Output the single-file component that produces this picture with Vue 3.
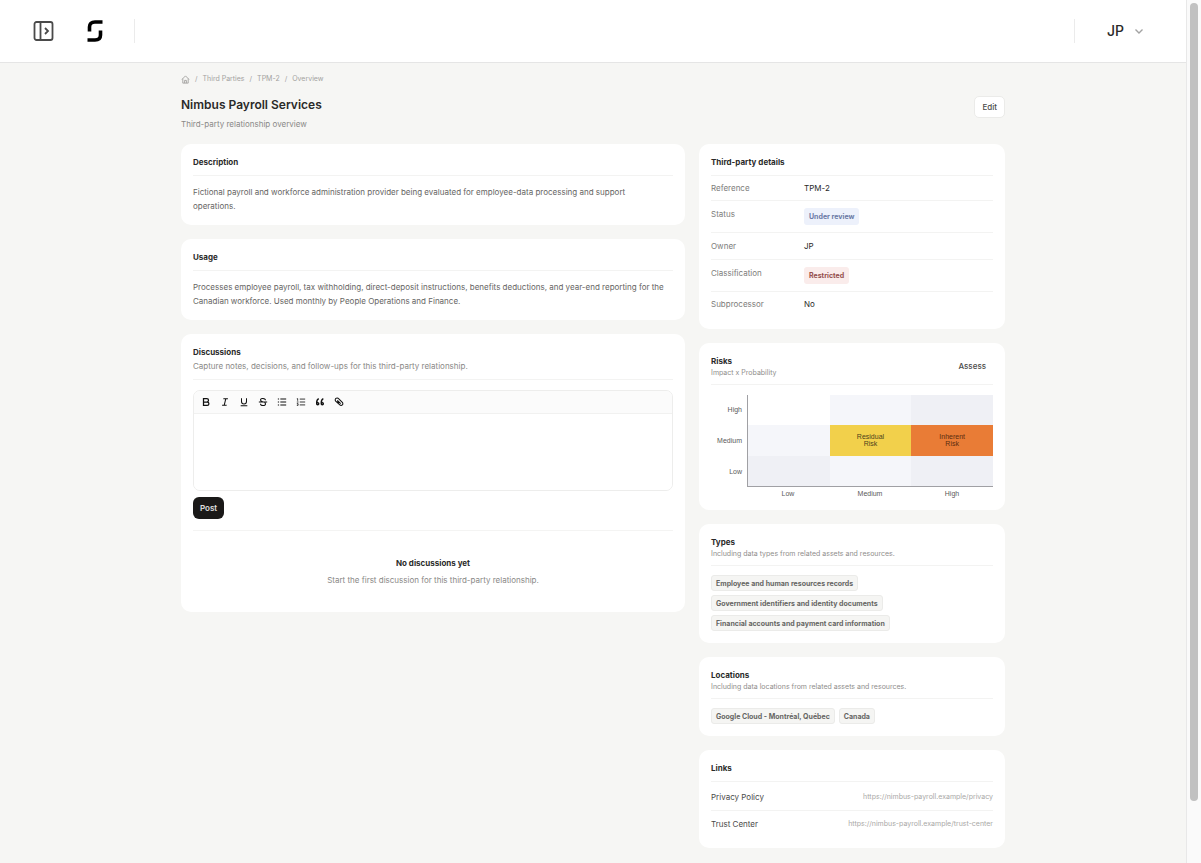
<script setup>
const crumbs = ['Third Parties', 'TPM-2', 'Overview']

const details = [
  { label: 'Reference', value: 'TPM-2' },
  { label: 'Status', value: 'Under review', tone: 'info' },
  { label: 'Owner', value: 'JP' },
  { label: 'Classification', value: 'Restricted', tone: 'danger' },
  { label: 'Subprocessor', value: 'No' },
]

const levels = ['Low', 'Medium', 'High']
const matrix = [
  { impact: 'High', cells: [{ tone: 'blank' }, { tone: 'pale' }, { tone: 'soft' }] },
  {
    impact: 'Medium',
    cells: [
      { tone: 'pale' },
      { tone: 'residual', text: 'Residual Risk' },
      { tone: 'inherent', text: 'Inherent Risk' },
    ],
  },
  { impact: 'Low', cells: [{ tone: 'soft' }, { tone: 'pale' }, { tone: 'soft' }] },
]

const types = [
  'Employee and human resources records',
  'Government identifiers and identity documents',
  'Financial accounts and payment card information',
]
const locations = ['Google Cloud - Montréal, Québec', 'Canada']
const links = [
  { name: 'Privacy Policy', url: 'https://nimbus-payroll.example/privacy' },
  { name: 'Trust Center', url: 'https://nimbus-payroll.example/trust-center' },
]

const tools = [
  { name: 'Bold', d: 'M6 4h8a4 4 0 0 1 0 8H6zM6 12h9a4 4 0 0 1 0 8H6z', w: 3 },
  { name: 'Italic', d: 'M8 4h11M5 20h11M14 4l-4 16', w: 2.5 },
  { name: 'Underline', d: 'M6 3v8a6 6 0 0 0 12 0V3M4 21h16', w: 2.5 },
  { name: 'Strikethrough', d: 'M18 8c0-5-12-6-12-1 0 3 3 4 6 5M2 12h20M6 16c0 6 12 6 12 1 0-2-1-3-2-4', w: 2.5 },
  { name: 'Bulleted list', d: 'M8 5h14M8 12h14M8 19h14M2 5h3M2 12h3M2 19h3', w: 2.5 },
  { name: 'Numbered list', d: 'M9 5h13M9 12h13M9 19h13M2 4h2v5M2 12h4M2 16h3v4H2', w: 2 },
  { name: 'Quote', d: 'M9 4C4 6 4 10 4 15M20 4c-5 2-5 6-5 11M4 16a2.500 2.500 0 1 0 5 0 2.500 2.500 0 0 0-5 0zM15 16a2.500 2.500 0 1 0 5 0 2.500 2.500 0 0 0-5 0z', w: 3.5 },
  { name: 'Link', d: 'M11 4l9 9a4 4 0 0 1-6 6L4 10a4 4 0 0 1 7-6zM8 8l8 8M12 14l-4-4', w: 2.5 },
]
</script>

<template>
  <div class="window">
    <div class="page">
      <header class="topbar">
        <button class="icon-button" type="button" aria-label="Expand sidebar">
          <svg class="panel-icon" viewBox="0 0 20 20" fill="none" stroke="currentColor" stroke-width="1.800">
            <rect x="1" y="1" width="18" height="18" rx="2" />
            <path d="M7 1v18M11.500 7l3 3-3 3" />
          </svg>
        </button>
        <a class="brand" href="#" aria-label="Home">
          <svg class="logo" viewBox="0 0 16 22" fill="none" stroke="currentColor" stroke-width="3.600">
            <path d="M15.500 2H8Q2.500 2 2.500 7V11.500" />
            <path d="M0.500 20H8Q13.500 20 13.500 15V10.500" />
          </svg>
        </a>
        <span class="bar-divider"></span>
        <span class="bar-divider end"></span>
        <button class="account" type="button">
          JP
          <svg class="chevron" viewBox="0 0 10 10" fill="none" stroke="currentColor" stroke-width="1.400">
            <path d="M1.500 3.500L5 7l3.500-3.500" />
          </svg>
        </button>
      </header>

      <main class="content">
        <nav class="crumbs" aria-label="Breadcrumb">
          <a href="#" aria-label="Home">
            <svg class="home" viewBox="0 0 10 10" fill="none" stroke="currentColor">
              <path d="M1 5L5 1l4 4M2 4v5h6V4M4 9V6h2v3" />
            </svg>
          </a>
          <template v-for="c in crumbs" :key="c">
            <span>/</span>
            <a href="#">{{ c }}</a>
          </template>
        </nav>

        <div class="title-row">
          <div>
            <h1>Nimbus Payroll Services</h1>
            <p class="lead">Third-party relationship overview</p>
          </div>
          <button class="edit" type="button">Edit</button>
        </div>

        <div class="columns">
          <div class="stack">
            <section class="card">
              <div class="head"><h2>Description</h2></div>
              <p class="prose">
                Fictional payroll and workforce administration provider being evaluated for employee-data processing and
                support operations.
              </p>
            </section>

            <section class="card">
              <div class="head"><h2>Usage</h2></div>
              <p class="prose">
                Processes employee payroll, tax withholding, direct-deposit instructions, benefits deductions, and
                year-end reporting for the Canadian workforce. Used monthly by People Operations and Finance.
              </p>
            </section>

            <section class="card">
              <div class="head">
                <h2>Discussions</h2>
                <p class="sub">Capture notes, decisions, and follow-ups for this third-party relationship.</p>
              </div>
              <div class="editor">
                <div class="toolbar">
                  <button v-for="t in tools" :key="t.name" class="tool" type="button" :aria-label="t.name">
                    <svg viewBox="0 0 24 24" fill="none" stroke="currentColor" :stroke-width="t.w">
                      <path :d="t.d" />
                    </svg>
                  </button>
                </div>
                <textarea class="entry" aria-label="Discussion message"></textarea>
              </div>
              <button class="post" type="button">Post</button>
              <div class="empty">
                <h3>No discussions yet</h3>
                <p>Start the first discussion for this third-party relationship.</p>
              </div>
            </section>
          </div>

          <div class="stack">
            <section class="card">
              <div class="head"><h2>Third-party details</h2></div>
              <dl class="details">
                <div v-for="d in details" :key="d.label" class="detail">
                  <dt>{{ d.label }}</dt>
                  <dd>
                    <span v-if="d.tone" class="chip" :class="d.tone">{{ d.value }}</span>
                    <template v-else>{{ d.value }}</template>
                  </dd>
                </div>
              </dl>
            </section>

            <section class="card">
              <div class="head compact split">
                <div>
                  <h2>Risks</h2>
                  <p class="note">Impact x Probability</p>
                </div>
                <button class="assess" type="button">Assess</button>
              </div>
              <div class="risk">
                <div class="impact">
                  <span v-for="r in matrix" :key="r.impact">{{ r.impact }}</span>
                </div>
                <div class="plot">
                  <template v-for="r in matrix" :key="r.impact">
                    <div v-for="(c, i) in r.cells" :key="i" class="cell" :class="c.tone">
                      <span v-if="c.text">{{ c.text }}</span>
                    </div>
                  </template>
                </div>
                <div class="probability">
                  <span v-for="l in levels" :key="l">{{ l }}</span>
                </div>
              </div>
            </section>

            <section class="card">
              <div class="head compact">
                <h2>Types</h2>
                <p class="note">Including data types from related assets and resources.</p>
              </div>
              <div class="chips">
                <span v-for="t in types" :key="t" class="chip neutral">{{ t }}</span>
              </div>
            </section>

            <section class="card">
              <div class="head compact">
                <h2>Locations</h2>
                <p class="note">Including data locations from related assets and resources.</p>
              </div>
              <div class="chips">
                <span v-for="l in locations" :key="l" class="chip neutral">{{ l }}</span>
              </div>
            </section>

            <section class="card">
              <div class="head"><h2>Links</h2></div>
              <ul class="links">
                <li v-for="l in links" :key="l.name">
                  <span>{{ l.name }}</span>
                  <a href="#">{{ l.url }}</a>
                </li>
              </ul>
            </section>
          </div>
        </div>
      </main>
    </div>
    <div class="scrollbar" aria-hidden="true"><div class="thumb"></div></div>
  </div>
</template>

<style>
body {
  background: #f6f6f4;
}
</style>

<style scoped>
.window {
  display: flex;
  min-height: 100vh;
  background: #f6f6f4;
  color: #2a2a29;
  font-family: Inter, "Liberation Sans", sans-serif;
  font-size: 8px;
  line-height: 12px;
}
.window * {
  box-sizing: border-box;
}
h1, h2, h3, p, dl, dd, ul {
  margin: 0;
  padding: 0;
}
button {
  font: inherit;
  color: inherit;
  background: none;
  border: 0;
  padding: 0;
  cursor: pointer;
}
a {
  color: inherit;
  text-decoration: none;
}
svg {
  display: block;
}
.page {
  flex: 1;
  min-width: 0;
}
.topbar {
  display: flex;
  align-items: center;
  height: 63px;
  padding: 0 42px 0 33px;
  background: #fff;
  border-bottom: 1px solid #e5e5e5;
}
.icon-button {
  color: #4a4a4a;
}
.panel-icon {
  width: 21px;
  height: 20px;
}
.brand {
  margin: 0 31px 0 33px;
  color: #000;
}
.logo {
  width: 16px;
  height: 22px;
}
.bar-divider {
  width: 1px;
  height: 24px;
  background: #ebebeb;
}
.bar-divider.end {
  margin-left: auto;
}
.account {
  display: flex;
  align-items: center;
  gap: 10px;
  margin-left: 32px;
  font-size: 14px;
  font-weight: 500;
  line-height: 20px;
}
.chevron {
  width: 10px;
  height: 10px;
  color: #a3a3a3;
}
.content {
  max-width: 824px;
  margin: 0 auto;
  padding: 10px 0 15px;
}
.crumbs {
  display: flex;
  align-items: center;
  gap: 5px;
  font-size: 7px;
  color: #a3a29f;
}
.home {
  width: 9px;
  height: 9px;
}
.title-row {
  display: flex;
  justify-content: space-between;
  align-items: flex-start;
  padding: 11px 0 14px;
}
h1 {
  font-size: 12px;
  font-weight: 600;
  line-height: 18px;
}
.lead {
  margin-top: 4px;
  color: #8a8987;
}
.edit {
  height: 22px;
  padding: 0 7px;
  background: #fff;
  border: 1px solid #ebebe9;
  border-radius: 5px;
  font-weight: 500;
  color: #4a4a49;
}
.columns {
  display: grid;
  grid-template-columns: minmax(0, 1fr) 306px;
  gap: 14px;
  align-items: start;
}
.stack {
  display: grid;
  gap: 14px;
}
.card {
  min-width: 0;
  padding: 12px;
  background: #fff;
  border-radius: 10px;
}
.head {
  padding-bottom: 7px;
  border-bottom: 1px solid #f3f3f2;
}
.head.compact {
  padding-bottom: 5px;
}
.split {
  display: flex;
  justify-content: space-between;
  align-items: center;
}
h2, h3 {
  font-size: 8px;
  font-weight: 700;
  line-height: 12px;
}
.sub {
  margin-top: 2px;
  color: #8a8987;
}
.note {
  font-size: 7px;
  color: #8f8e8c;
}
.prose {
  margin-top: 9px;
  padding-right: 5px;
  line-height: 14px;
  color: #666563;
}
.editor {
  margin-top: 10px;
  border: 1px solid #ededec;
  border-radius: 7px;
  overflow: hidden;
}
.toolbar {
  display: flex;
  gap: 9px;
  padding: 6px 7px;
  background: #fbfbfb;
  border-bottom: 1px solid #f1f1f0;
}
.tool {
  width: 10px;
  height: 10px;
  color: #111;
}
.tool svg {
  width: 10px;
  height: 10px;
}
.entry {
  display: block;
  width: 100%;
  height: 76px;
  padding: 8px;
  border: 0;
  outline: 0;
  resize: none;
  font: inherit;
  background: #fff;
}
.post {
  display: block;
  height: 22px;
  margin-top: 6px;
  padding: 0 7px;
  background: #1a1918;
  border-radius: 6px;
  color: #e0e0e0;
  font-weight: 600;
}
.empty {
  margin-top: 11px;
  padding: 26px 0 14px;
  border-top: 1px solid #f4f4f3;
  text-align: center;
  color: #8a8987;
}
.empty h3 {
  color: #2a2a29;
}
.empty p {
  margin-top: 5px;
}
.detail {
  display: grid;
  grid-template-columns: 93px 1fr;
  padding: 7px 0;
  border-bottom: 1px solid #f3f3f2;
}
.detail:first-child {
  padding: 6px 0;
}
.detail:last-child {
  padding: 6px 0 7px;
  border-bottom: 0;
}
dt {
  color: #7d7c7a;
}
.chip {
  display: block;
  width: fit-content;
  padding: 3px 4px 1px;
  border: 1px solid transparent;
  border-radius: 3px;
  font-size: 7px;
  font-weight: 700;
  line-height: 10px;
}
.detail .chip {
  padding-bottom: 2px;
}
.info {
  background: #edf1fb;
  color: #6b7aa6;
}
.danger {
  background: #faeceb;
  color: #954f4d;
}
.neutral {
  background: #f5f5f3;
  border-color: #ebebe9;
  color: #666563;
}
.chips {
  display: flex;
  flex-wrap: wrap;
  gap: 4px;
  margin-top: 9px;
}
.assess {
  padding: 4px 7px 6px;
  margin: -5px 0;
  font-weight: 500;
  color: #4a4a49;
}
.risk {
  display: grid;
  grid-template-columns: 36px 1fr;
  margin-top: 10px;
  font-family: "Liberation Sans", Arial, sans-serif;
  font-size: 7px;
  line-height: 10px;
  color: #5a5a5a;
}
.impact {
  display: grid;
  grid-template-rows: repeat(3, 1fr);
  align-items: center;
  padding-right: 5px;
  text-align: right;
}
.plot {
  display: grid;
  grid-template-columns: repeat(3, 1fr);
  grid-template-rows: repeat(3, 1fr);
  height: 92px;
  border-left: 1px solid #a0a0a4;
  border-bottom: 1px solid #a0a0a4;
}
.cell {
  display: flex;
  align-items: center;
  justify-content: center;
  line-height: 7px;
  text-align: center;
}
.cell span {
  width: 32px;
}
.pale {
  background: #f5f6fa;
}
.soft {
  background: #eff0f5;
}
.residual {
  background: #f2d04b;
  color: #4d431c;
}
.inherent {
  background: #e97c36;
  color: #5b2c10;
}
.probability {
  display: grid;
  grid-column: 2;
  grid-template-columns: repeat(3, 1fr);
  padding-top: 3px;
  line-height: 8px;
  text-align: center;
}
.links {
  list-style: none;
}
.links li {
  display: flex;
  justify-content: space-between;
  padding: 7px 0;
  color: #4a4a49;
}
.links li:first-child {
  padding-top: 9px;
  border-bottom: 1px solid #f3f3f2;
}
.links li:last-child {
  padding-bottom: 6px;
}
.links a {
  font-size: 7px;
  color: #a9a8a6;
}
.scrollbar {
  position: sticky;
  top: 0;
  width: 15px;
  height: 100vh;
  padding: 3px 3px 62px;
  background: #fafafa;
  border-left: 1px solid #e8e8e8;
}
.thumb {
  width: 8px;
  height: 100%;
  border-radius: 4px;
  background: #c1c1c1;
}
</style>
